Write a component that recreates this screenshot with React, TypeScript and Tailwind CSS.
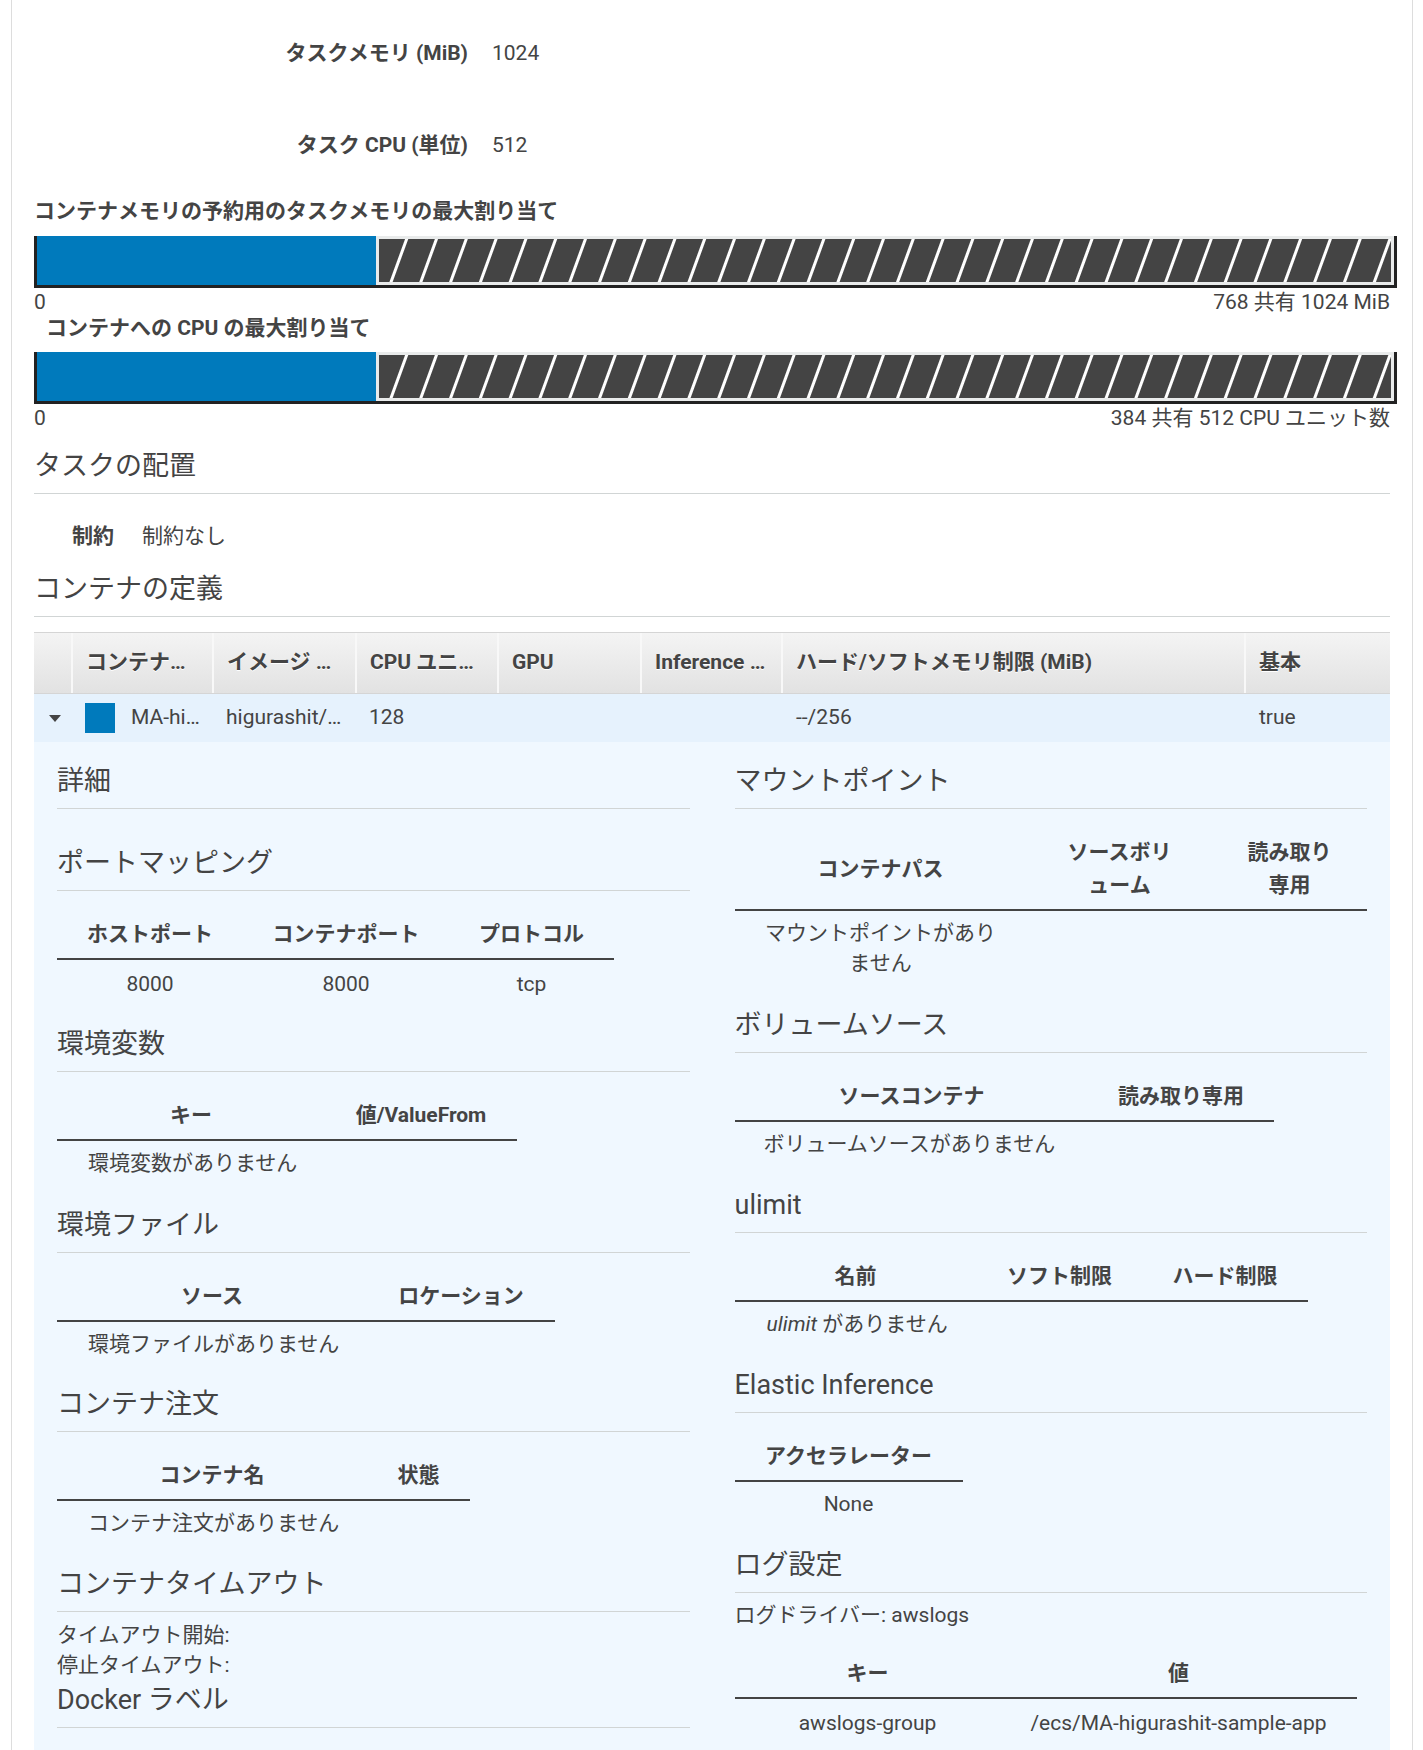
import React from 'react';
import clsx from 'clsx';

type Col = { label: React.ReactNode; w: string; px?: string };

const SectionHeading = ({ title, className }: { title: React.ReactNode; className?: string }) => (
  <h3 className={clsx('border-b border-[#d1d5d5] pb-[9px] text-[27px] leading-[36px] font-normal', className)}>
    {title}
  </h3>
);

// small detail table: bold centered headers with a dark rule below
const MiniTable = ({
  cols,
  className,
  children
}: {
  cols: Col[];
  className?: string;
  children?: React.ReactNode;
}) => (
  <div className={clsx('mt-[27px] w-fit', className)}>
    <div className="flex border-b-2 border-[#444]">
      {cols.map((c, i) => (
        <div
          key={i}
          className={clsx(c.w, c.px, 'flex items-center justify-center pb-[7px] text-center font-bold leading-[33px]')}
        >
          {c.label}
        </div>
      ))}
    </div>
    {children}
  </div>
);

const ValueRow = ({ cols, values }: { cols: Col[]; values: string[] }) => (
  <div className="flex pt-[9px] leading-[30px]">
    {values.map((v, i) => (
      <div key={i} className={clsx(cols[i].w, 'text-center')}>
        {v}
      </div>
    ))}
  </div>
);

const EmptyRow = ({ children, className }: { children: React.ReactNode; className?: string }) => (
  <div className={clsx('pt-[7px] leading-[30px] whitespace-nowrap', className)}>{children}</div>
);

const UsageBar = () => (
  <div className="-mr-[7px] flex h-[52px] border-x-[3px] border-b-[3px] border-[#222]">
    <div className="w-1/4 bg-[#007abc]" />
    <div className="flex-1 bg-[#e9ebeb] p-[3px]">
      <div className="h-full bg-[repeating-linear-gradient(110deg,#444_0px,#444_24px,#fff_25px,#fff_27px,#444_28px)]" />
    </div>
  </div>
);

const Triangle = () => (
  <svg width="12" height="7" viewBox="0 0 12 7">
    <path d="M0 0h12L6 7z" fill="#444" />
  </svg>
);

const portCols: Col[] = [
  { label: 'ホストポート', w: 'w-[186px]' },
  { label: 'コンテナポート', w: 'w-[206px]' },
  { label: 'プロトコル', w: 'w-[165px]' }
];
const envCols: Col[] = [
  { label: 'キー', w: 'w-[268px]' },
  { label: '値/ValueFrom', w: 'w-[192px]' }
];
const envFileCols: Col[] = [
  { label: 'ソース', w: 'w-[310px]' },
  { label: 'ロケーション', w: 'w-[188px]' }
];
const orderCols: Col[] = [
  { label: 'コンテナ名', w: 'w-[310px]' },
  { label: '状態', w: 'w-[103px]' }
];
const mountCols: Col[] = [
  { label: 'コンテナパス', w: 'w-[292px]' },
  { label: 'ソースボリューム', w: 'w-[186px]', px: 'px-[35px]' },
  { label: '読み取り専用', w: 'w-[154px]', px: 'px-[30px]' }
];
const volumeCols: Col[] = [
  { label: 'ソースコンテナ', w: 'w-[354px]' },
  { label: '読み取り専用', w: 'w-[185px]' }
];
const ulimitCols: Col[] = [
  { label: '名前', w: 'w-[242px]' },
  { label: 'ソフト制限', w: 'w-[166px]' },
  { label: 'ハード制限', w: 'w-[165px]' }
];
const accelCols: Col[] = [{ label: 'アクセラレーター', w: 'w-[228px]' }];
const logCols: Col[] = [
  { label: 'キー', w: 'w-[266px]' },
  { label: '値', w: 'w-[356px]' }
];

const headerCells = ['', 'コンテナ…', 'イメージ …', 'CPU ユニ…', 'GPU', 'Inference …', 'ハード/ソフトメモリ制限 (MiB)', '基本'];

export default function App() {
  return (
    <div className="min-h-screen bg-white font-['Roboto','Noto_Sans_CJK_JP',sans-serif] text-[21px] text-[#444]">
      <div className="ml-[11px] mr-[10px] border-x border-[#ddd] px-[22px] pt-[39px]">
        {/* task size */}
        <div className="flex flex-col gap-[62px]">
          <div className="flex h-[30px] items-center">
            <div className="w-[434px] text-right font-bold">タスクメモリ (MiB)</div>
            <div className="ml-6">1024</div>
          </div>
          <div className="flex h-[30px] items-center">
            <div className="w-[434px] text-right font-bold">タスク CPU (単位)</div>
            <div className="ml-6">512</div>
          </div>
        </div>

        <div className="mt-[35px] font-bold leading-[30px]">コンテナメモリの予約用のタスクメモリの最大割り当て</div>
        <div className="mt-[10px]">
          <UsageBar />
        </div>
        <div className="flex justify-between leading-[28px]">
          <span>0</span>
          <span>768 共有 1024 MiB</span>
        </div>

        <div className="pl-[12px] font-bold leading-[24px]">コンテナへの CPU の最大割り当て</div>
        <div className="mt-[12px]">
          <UsageBar />
        </div>
        <div className="flex justify-between leading-[28px]">
          <span>0</span>
          <span>384 共有 512 CPU ユニット数</span>
        </div>

        <SectionHeading title="タスクの配置" className="mt-[16px]" />
        <div className="mt-[27px] flex pl-[38px] leading-[30px]">
          <span className="w-[70px] font-bold">制約</span>
          <span>制約なし</span>
        </div>

        <SectionHeading title="コンテナの定義" className="mt-[20px]" />

        {/* container definitions table */}
        <div className="mt-[15px]">
          <div className="grid h-[62px] grid-cols-[39px_141px_143px_142px_143px_141px_1fr_144px] border-y border-[#d5d5d5] bg-gradient-to-b from-[#f4f4f4] to-[#e2e2e2]">
            {headerCells.map((h, i) => (
              <div
                key={i}
                className={clsx(
                  'flex items-center whitespace-nowrap pl-[13px] font-bold [text-shadow:0_1px_0_#fff]',
                  i < headerCells.length - 1 && 'border-r-2 border-[#f8f8f8]'
                )}
              >
                {h}
              </div>
            ))}
          </div>
          <div className="grid h-[48px] grid-cols-[39px_141px_143px_142px_143px_141px_1fr_144px] items-center bg-[#e6f2fd]">
            <div className="flex justify-center pl-[2px]">
              <Triangle />
            </div>
            <div className="flex items-center pl-[12px]">
              <span className="h-[30px] w-[30px] bg-[#007abc]" />
              <span className="ml-[16px]">MA-hi…</span>
            </div>
            <div className="pl-[12px]">higurashit/…</div>
            <div className="pl-[12px]">128</div>
            <div />
            <div />
            <div className="pl-[13px]">--/256</div>
            <div className="pl-[13px]">true</div>
          </div>

          {/* expanded details */}
          <div className="grid grid-cols-2 gap-x-[45px] bg-[#f0f8ff] px-[23px] pb-[40px] pt-[21px]">
            <div>
              <SectionHeading title="詳細" />

              <SectionHeading title="ポートマッピング" className="mt-[36px]" />
              <MiniTable cols={portCols}>
                <ValueRow cols={portCols} values={['8000', '8000', 'tcp']} />
              </MiniTable>

              <SectionHeading title="環境変数" className="mt-[27px]" />
              <MiniTable cols={envCols}>
                <EmptyRow className="pl-[31px]">環境変数がありません</EmptyRow>
              </MiniTable>

              <SectionHeading title="環境ファイル" className="mt-[29px]" />
              <MiniTable cols={envFileCols}>
                <EmptyRow className="pl-[31px]">環境ファイルがありません</EmptyRow>
              </MiniTable>

              <SectionHeading title="コンテナ注文" className="mt-[27px]" />
              <MiniTable cols={orderCols}>
                <EmptyRow className="pl-[31px]">コンテナ注文がありません</EmptyRow>
              </MiniTable>

              <SectionHeading title="コンテナタイムアウト" className="mt-[28px]" />
              <div className="pt-[8px] leading-[30px]">
                <div>タイムアウト開始:</div>
                <div>停止タイムアウト:</div>
              </div>
              <SectionHeading title="Docker ラベル" className="mt-[2px] pb-[3px]" />
            </div>

            <div>
              <SectionHeading title="マウントポイント" />
              <MiniTable cols={mountCols} className="mt-[25px]">
                <div className="w-[292px] px-[29px] pt-[7px] text-center leading-[30px]">マウントポイントがありません</div>
              </MiniTable>

              <SectionHeading title="ボリュームソース" className="mt-[29px]" />
              <MiniTable cols={volumeCols}>
                <EmptyRow className="pl-[29px]">ボリュームソースがありません</EmptyRow>
              </MiniTable>

              <SectionHeading title="ulimit" className="mt-[28px]" />
              <MiniTable cols={ulimitCols}>
                <EmptyRow className="pl-[32px]">
                  <i>ulimit</i> がありません
                </EmptyRow>
              </MiniTable>

              <SectionHeading title="Elastic Inference" className="mt-[28px]" />
              <MiniTable cols={accelCols}>
                <EmptyRow className="text-center">None</EmptyRow>
              </MiniTable>

              <SectionHeading title="ログ設定" className="mt-[28px]" />
              <div className="pt-[7px] leading-[30px]">ログドライバー: awslogs</div>
              <MiniTable cols={logCols}>
                <ValueRow cols={logCols} values={['awslogs-group', '/ecs/MA-higurashit-sample-app']} />
              </MiniTable>
            </div>
          </div>
        </div>
      </div>
    </div>
  );
}
